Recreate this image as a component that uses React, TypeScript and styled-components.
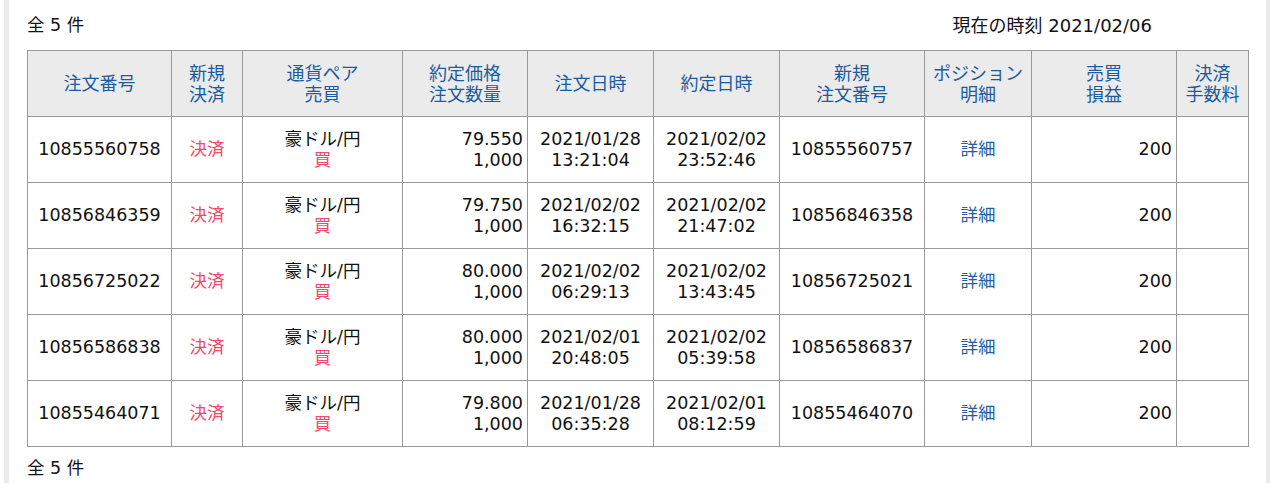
import React from 'react'
import styled, { createGlobalStyle } from 'styled-components'

const GlobalStyle = createGlobalStyle`
  html, body {
    margin: 0;
    padding: 0;
    background: #ffffff;
  }
  body {
    font-family: 'DejaVu Sans', 'Noto Sans CJK JP', sans-serif;
    color: #111111;
  }
`

type Order = {
  no: string
  price: string
  qty: string
  orderDate: string
  orderTime: string
  execDate: string
  execTime: string
  newNo: string
  profit: string
}

const orders: Order[] = [
  { no: '10855560758', price: '79.550', qty: '1,000', orderDate: '2021/01/28', orderTime: '13:21:04', execDate: '2021/02/02', execTime: '23:52:46', newNo: '10855560757', profit: '200' },
  { no: '10856846359', price: '79.750', qty: '1,000', orderDate: '2021/02/02', orderTime: '16:32:15', execDate: '2021/02/02', execTime: '21:47:02', newNo: '10856846358', profit: '200' },
  { no: '10856725022', price: '80.000', qty: '1,000', orderDate: '2021/02/02', orderTime: '06:29:13', execDate: '2021/02/02', execTime: '13:43:45', newNo: '10856725021', profit: '200' },
  { no: '10856586838', price: '80.000', qty: '1,000', orderDate: '2021/02/01', orderTime: '20:48:05', execDate: '2021/02/02', execTime: '05:39:58', newNo: '10856586837', profit: '200' },
  { no: '10855464071', price: '79.800', qty: '1,000', orderDate: '2021/01/28', orderTime: '06:35:28', execDate: '2021/02/01', execTime: '08:12:59', newNo: '10855464070', profit: '200' },
]

const colWidths = [144, 71, 160, 125, 126, 126, 145, 107, 145, 72]

const headers: string[][] = [
  ['注文番号'],
  ['新規', '決済'],
  ['通貨ペア', '売買'],
  ['約定価格', '注文数量'],
  ['注文日時'],
  ['約定日時'],
  ['新規', '注文番号'],
  ['ポジション', '明細'],
  ['売買', '損益'],
  ['決済', '手数料'],
]

const App = () => {
  return (
    <>
      <GlobalStyle />
      <Page>
        <Panel>
          <InfoBar>
            <Count>全 5 件</Count>
            <Now>現在の時刻 2021/02/06</Now>
          </InfoBar>
          <HistoryTable>
            <colgroup>
              {colWidths.map((w, i) => (
                <col key={i} style={{ width: w }} />
              ))}
            </colgroup>
            <thead>
              <tr>
                {headers.map((lines, i) => (
                  <HeadCell key={i}>
                    {lines.map((l, j) => (
                      <Line key={j}>{l}</Line>
                    ))}
                  </HeadCell>
                ))}
              </tr>
            </thead>
            <tbody>
              {orders.map((o) => (
                <tr key={o.no}>
                  <Cell>{o.no}</Cell>
                  <Cell>
                    <Red>決済</Red>
                  </Cell>
                  <Cell>
                    <Line>豪ドル/円</Line>
                    <Red>買</Red>
                  </Cell>
                  <Cell $align="right">
                    <Line>{o.price}</Line>
                    <Line>{o.qty}</Line>
                  </Cell>
                  <Cell>
                    <Line>{o.orderDate}</Line>
                    <Line>{o.orderTime}</Line>
                  </Cell>
                  <Cell>
                    <Line>{o.execDate}</Line>
                    <Line>{o.execTime}</Line>
                  </Cell>
                  <Cell>{o.newNo}</Cell>
                  <Cell>
                    <DetailLink href="#">詳細</DetailLink>
                  </Cell>
                  <Cell $align="right">{o.profit}</Cell>
                  <Cell />
                </tr>
              ))}
            </tbody>
          </HistoryTable>
          <Footer>全 5 件</Footer>
        </Panel>
      </Page>
    </>
  )
}

export default App

const Page = styled.div`
  padding: 0 9px 0 4px;
  height: 483px;
  box-sizing: border-box;
`

const Panel = styled.div`
  height: 100%;
  box-sizing: border-box;
  border-left: 5px solid #ebebeb;
  border-right: 4px solid #ebebeb;
  padding: 0 17px 0 18px;
  font-size: 17.5px;
`

const InfoBar = styled.div`
  display: flex;
  justify-content: space-between;
  align-items: center;
  height: 50px;
  padding-right: 97px;
`

const Count = styled.span`
  line-height: 21px;
`

const Now = styled.span`
  line-height: 21px;
  font-size: 18px;
`

const HistoryTable = styled.table`
  border-collapse: collapse;
  table-layout: fixed;
  width: 1221px;
`

const HeadCell = styled.th`
  height: 66px;
  box-sizing: border-box;
  padding: 0 2px;
  background: #ebebeb;
  border: 1px solid #999999;
  color: #1b5c9e;
  font-weight: normal;
  font-size: 18px;
  text-align: center;
  vertical-align: middle;
  line-height: 21px;
  white-space: nowrap;
`

const Cell = styled.td<{ $align?: 'left' | 'center' | 'right' }>`
  height: 66px;
  box-sizing: border-box;
  padding: 0 4px;
  border: 1px solid #999999;
  text-align: ${(p) => p.$align || 'center'};
  vertical-align: middle;
  line-height: 21px;
  white-space: nowrap;
`

const Line = styled.div``

const Red = styled.div`
  color: #f2486a;
`

const DetailLink = styled.a`
  color: #1b5fa6;
  text-decoration: none;
`

const Footer = styled.div`
  padding-top: 11px;
  line-height: 21px;
`
